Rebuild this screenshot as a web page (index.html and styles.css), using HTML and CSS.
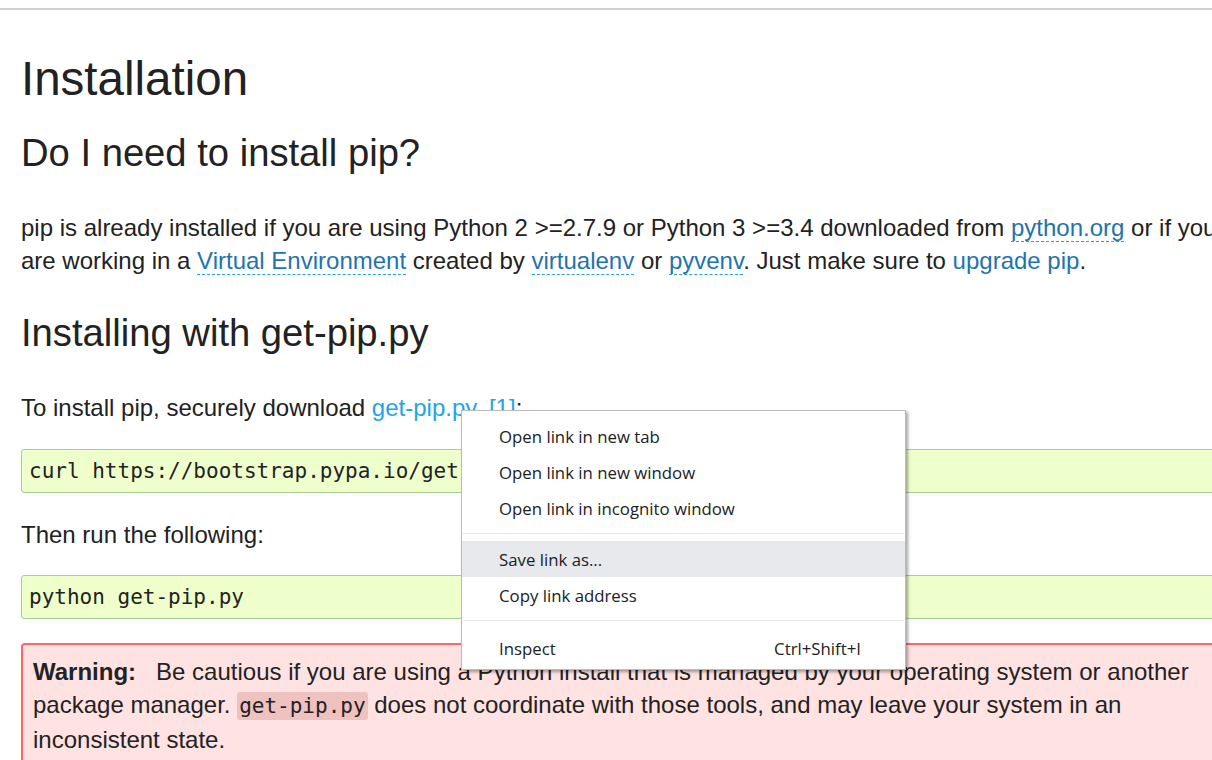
FILE: index.html
```html
<!DOCTYPE html>
<html lang="en">
<head>
<meta charset="utf-8">
<title>Installation — pip</title>
<link rel="stylesheet" href="styles.css">
</head>
<body>
<div class="topline"></div>
<main class="doc">
  <h1 class="title">Installation</h1>
  <h2 class="section first">Do I need to install pip?</h2>
  <p class="para">pip is already installed if you are using Python 2 &gt;=2.7.9 or Python 3 &gt;=3.4 downloaded from <a class="ref" href="#">python.org</a> or if you are working in a <a class="ref" href="#">Virtual Environment</a> created by <a class="ref" href="#">virtualenv</a> or <a class="ref" href="#">pyvenv</a>. Just make sure to <a class="plain" href="#">upgrade pip</a>.</p>
  <h2 class="section second">Installing with get-pip.py</h2>
  <p class="para">To install pip, securely download <a class="bright" href="#">get-pip.py</a> <a class="bright footnote" href="#">[1]</a>:</p>
  <div class="code-block first-code">curl https://bootstrap.pypa.io/get-pip.py -o get-pip.py</div>
  <p class="para after-code">Then run the following:</p>
  <div class="code-block second-code">python get-pip.py</div>
  <div class="warning">
    <p class="warning-text"><strong class="warning-title">Warning:</strong>Be cautious if you are using a Python install that is managed by your operating system or another package manager. <code class="inline-code">get-pip.py</code> does not coordinate with those tools, and may leave your system in an inconsistent state.</p>
  </div>
</main>
<div class="ctx-menu">
  <div class="ctx-item">Open link in new tab</div>
  <div class="ctx-item">Open link in new window</div>
  <div class="ctx-item">Open link in incognito window</div>
  <div class="ctx-sep"></div>
  <div class="ctx-item active">Save link as...</div>
  <div class="ctx-item">Copy link address</div>
  <div class="ctx-sep last"></div>
  <div class="ctx-item"><span>Inspect</span><span class="shortcut">Ctrl+Shift+I</span></div>
</div>
</body>
</html>
```
FILE: styles.css
```css
html, body {
  margin: 0;
  overflow: hidden;
  background: #fff;
}

body {
  font-family: "Liberation Sans", Arial, sans-serif;
  color: #222;
  padding-top: 8px;
}

.topline {
  height: 2px;
  background: #d0d0d0;
}

.doc {
  width: 1224px;
  padding-left: 21px;
}

.title {
  font-size: 47.5px;
  font-weight: normal;
  line-height: 56px;
  margin: 41px 0 0;
}

.section {
  font-size: 38.2px;
  font-weight: normal;
  line-height: 46px;
  margin: 0 0 35px;
}

.section.first {
  margin-top: 23px;
}

.section.second {
  margin-top: 33px;
}

.para {
  margin: 0;
  font-size: 24px;
  line-height: 33px;
}

.para.after-code {
  margin-top: 25px;
}

a {
  text-decoration: none;
}

.ref {
  color: #1f74ad;
  border-bottom: 1px dashed #2a9fd6;
}

.plain {
  color: #1f74ad;
}

.bright {
  color: #1fa5e3;
}

.footnote {
  margin-left: 5px;
}

.code-block {
  border: 1px solid #aacc99;
  background: #eeffcc;
  border-radius: 3px;
  padding: 9px 7px;
  font-family: "DejaVu Sans Mono", monospace;
  font-size: 21px;
  line-height: 24px;
  white-space: pre;
  overflow: hidden;
  color: #222;
}

.first-code {
  margin-top: 25px;
}

.second-code {
  margin-top: 24px;
}

.warning {
  margin-top: 24px;
  border: 2px solid #ff6666;
  border-radius: 4px;
  background: #ffe2e2;
  padding: 10px 10px 20px;
}

.warning-text {
  margin: 0;
  font-size: 24px;
  line-height: 33px;
}

.warning-title {
  margin-right: 20px;
}

.inline-code {
  font-family: "DejaVu Sans Mono", monospace;
  font-size: 21px;
  background: #efc1c1;
  border-radius: 3px;
  padding: 2px 2px;
}

.ctx-menu {
  position: absolute;
  left: 461px;
  top: 410px;
  width: 445px;
  box-sizing: border-box;
  border: 1px solid #bbbbbb;
  background: #fff;
  padding: 7px 0 3px;
  box-shadow: 2px 2px 3px rgba(0, 0, 0, 0.35);
  font-family: "Open Sans", "Noto Sans", sans-serif;
  font-size: 16.8px;
  color: #202124;
}

.ctx-item {
  height: 36px;
  display: flex;
  align-items: center;
  justify-content: space-between;
  padding: 0 44px 0 37px;
}

.ctx-item.active {
  background: #e8e9ec;
}

.ctx-sep {
  height: 1px;
  background: #e6e6ea;
  margin: 7px 1px;
}

.ctx-sep.last {
  margin-bottom: 9px;
}
```
